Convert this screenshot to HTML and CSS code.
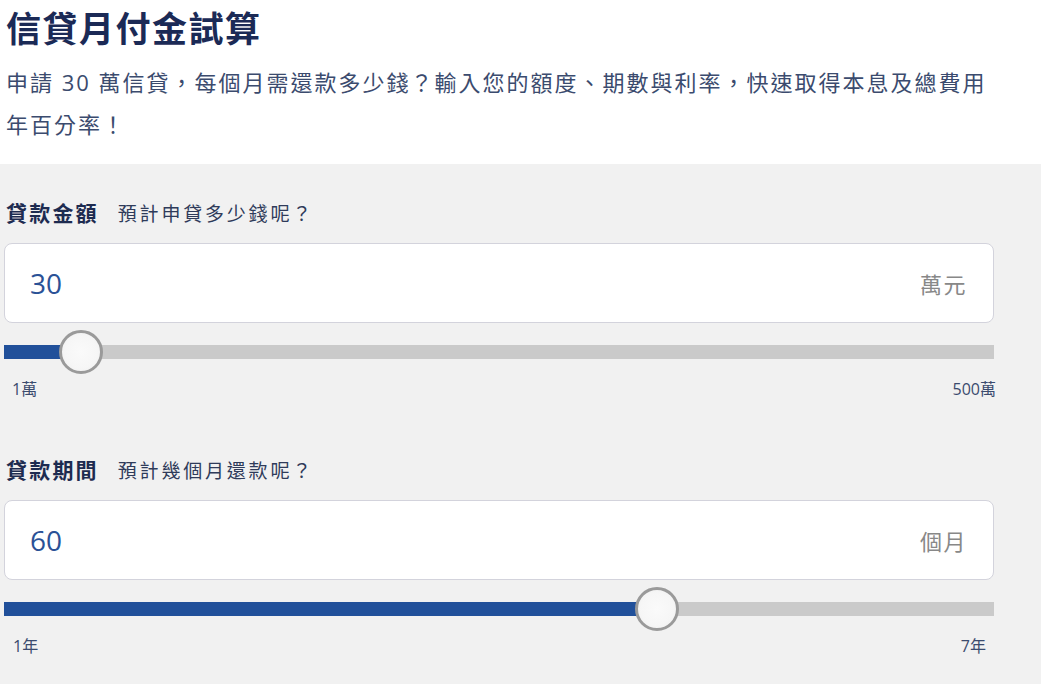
FILE: index.html
```html
<!DOCTYPE html>
<html lang="zh-Hant">
<head>
  <meta charset="UTF-8">
  <meta name="viewport" content="width=device-width, initial-scale=1.0">
  <title>信貸月付金試算</title>
  <link rel="stylesheet" href="styles.css">
</head>
<body>
  <header class="intro">
    <h1>信貸月付金試算</h1>
    <p>申請 30 萬信貸，每個月需還款多少錢？輸入您的額度、期數與利率，快速取得本息及總費用年百分率！</p>
  </header>
  <section class="calc">
    <div class="field">
      <div class="field-title">
        <span class="field-name">貸款金額</span>
        <span class="field-hint">預計申貸多少錢呢？</span>
      </div>
      <div class="field-input">
        <span class="field-value">30</span>
        <span class="field-unit">萬元</span>
      </div>
      <div class="slider">
        <div class="slider-track">
          <div class="slider-fill" style="width: 77px"></div>
          <div class="slider-thumb" style="left: 77px"></div>
        </div>
      </div>
      <div class="slider-range">
        <span>1萬</span>
        <span>500萬</span>
      </div>
    </div>
    <div class="field">
      <div class="field-title">
        <span class="field-name">貸款期間</span>
        <span class="field-hint">預計幾個月還款呢？</span>
      </div>
      <div class="field-input">
        <span class="field-value">60</span>
        <span class="field-unit">個月</span>
      </div>
      <div class="slider">
        <div class="slider-track">
          <div class="slider-fill" style="width: 653px"></div>
          <div class="slider-thumb" style="left: 653px"></div>
        </div>
      </div>
      <div class="slider-range slider-range--inset">
        <span>1年</span>
        <span>7年</span>
      </div>
    </div>
  </section>
</body>
</html>
```

FILE: styles.css
```css
* {
  box-sizing: border-box;
}
html {
  font-family: 'Open Sans', 'Noto Sans CJK TC', sans-serif;
}
body {
  margin: 0;
  background: #fff;
}
.intro {
  padding: 7px 6px 0;
  width: 1000px;
}
.intro h1 {
  margin: 0;
  font-size: 35px;
  line-height: 44px;
  font-weight: bold;
  letter-spacing: 1.5px;
  color: #1b2a56;
}
.intro p {
  margin: 10px 0 0;
  font-size: 22px;
  line-height: 42px;
  letter-spacing: 2px;
  color: #3b4b6e;
}
.calc {
  margin-top: 19px;
  background: #f1f1f1;
  padding: 34px 0 30px 4px;
}
.field {
  width: 990px;
}
.field + .field {
  margin-top: 56px;
}
.field-title {
  display: flex;
  align-items: baseline;
  gap: 19px;
  padding-left: 2px;
  line-height: 30px;
  height: 30px;
}
.field-name {
  font-size: 21px;
  font-weight: bold;
  letter-spacing: 2.2px;
  color: #1d2b50;
}
.field-hint {
  font-size: 19px;
  letter-spacing: 2.8px;
  color: #2f3b5a;
}
.field-input {
  margin-top: 15px;
  height: 80px;
  display: flex;
  align-items: center;
  justify-content: space-between;
  padding: 0 26px 0 25px;
  background: #fff;
  border: 1px solid #d3d3dc;
  border-radius: 8px;
}
.field-value {
  font-size: 28px;
  color: #2a5196;
}
.field-unit {
  font-size: 22px;
  letter-spacing: 1.5px;
  color: #888;
}
.slider {
  margin-top: 7px;
  height: 44px;
  display: flex;
  align-items: center;
}
.slider-track {
  position: relative;
  width: 100%;
  height: 14px;
  background: #cacaca;
}
.slider-fill {
  height: 100%;
  background: #21509a;
}
.slider-thumb {
  position: absolute;
  top: 50%;
  width: 44px;
  height: 44px;
  margin: -22px 0 0 -22px;
  border-radius: 50%;
  border: 3px solid #9a9a9a;
  background: radial-gradient(circle, #fafafa 0%, #f6f6f6 60%, #ececec 100%);
}
.slider-range {
  margin-top: 5px;
  display: flex;
  justify-content: space-between;
  padding: 0 0 0 8px;
  margin-right: -2px;
  font-size: 16px;
  line-height: 20px;
  color: #3b4b6e;
}
.slider-range--inset {
  padding: 0 8px 0 9px;
  margin-right: 0;
}
```
